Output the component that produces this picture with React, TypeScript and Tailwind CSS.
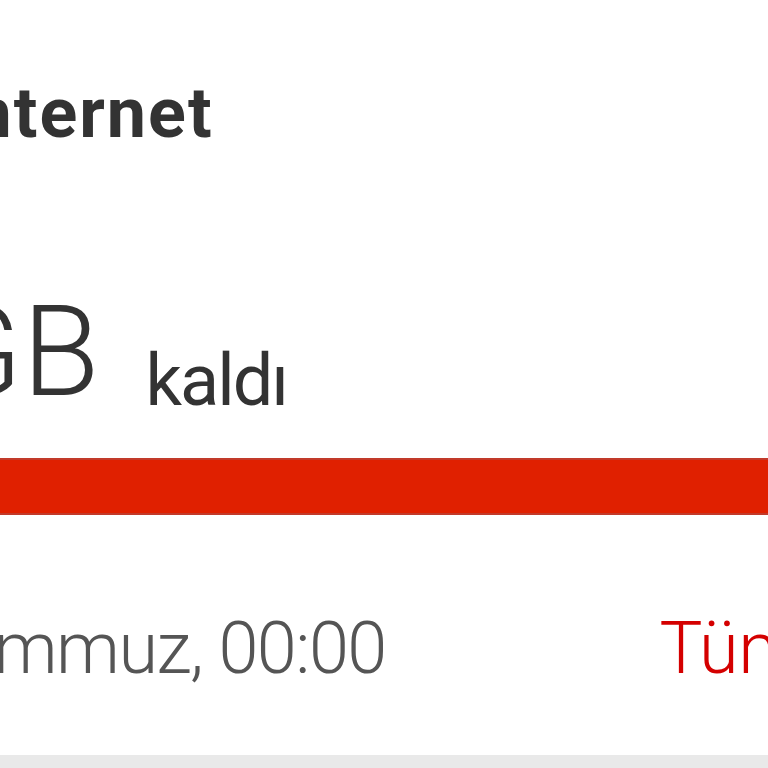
export default function App() {
  return (
    <div
      className="w-[768px] h-[768px] overflow-hidden bg-white flex flex-col"
      style={{ fontFamily: 'Roboto, "Open Sans", sans-serif' }}
    >
      <div className="mt-[78px] ml-[-50px] text-[70px] leading-none font-bold tracking-[2px] text-[#333333] whitespace-nowrap">
        Internet
      </div>
      <div className="mt-[141px] flex items-start whitespace-nowrap">
        <div className="ml-[-64px] text-[126px] leading-none font-light text-[#333333]">GB</div>
        <div className="ml-[46px] mt-[56px] text-[72px] leading-none tracking-[-2px] text-[#333333]">kaldı</div>
      </div>
      <div className="mt-[41px] h-[57px] w-full bg-[#e02000] border-y-2 border-[#c23a2a]" />
      <div className="mt-[98px] flex items-start whitespace-nowrap">
        <div className="ml-[-80px] text-[72px] leading-none font-light tracking-[-1.5px] text-[#555555]">Temmuz, 00:00</div>
        <div className="ml-auto mr-[-74px] text-[72px] leading-none font-light text-[#d40000]">Tümü</div>
      </div>
      <div className="mt-auto h-[13px] bg-[#e9e9e9]" />
    </div>
  );
}
